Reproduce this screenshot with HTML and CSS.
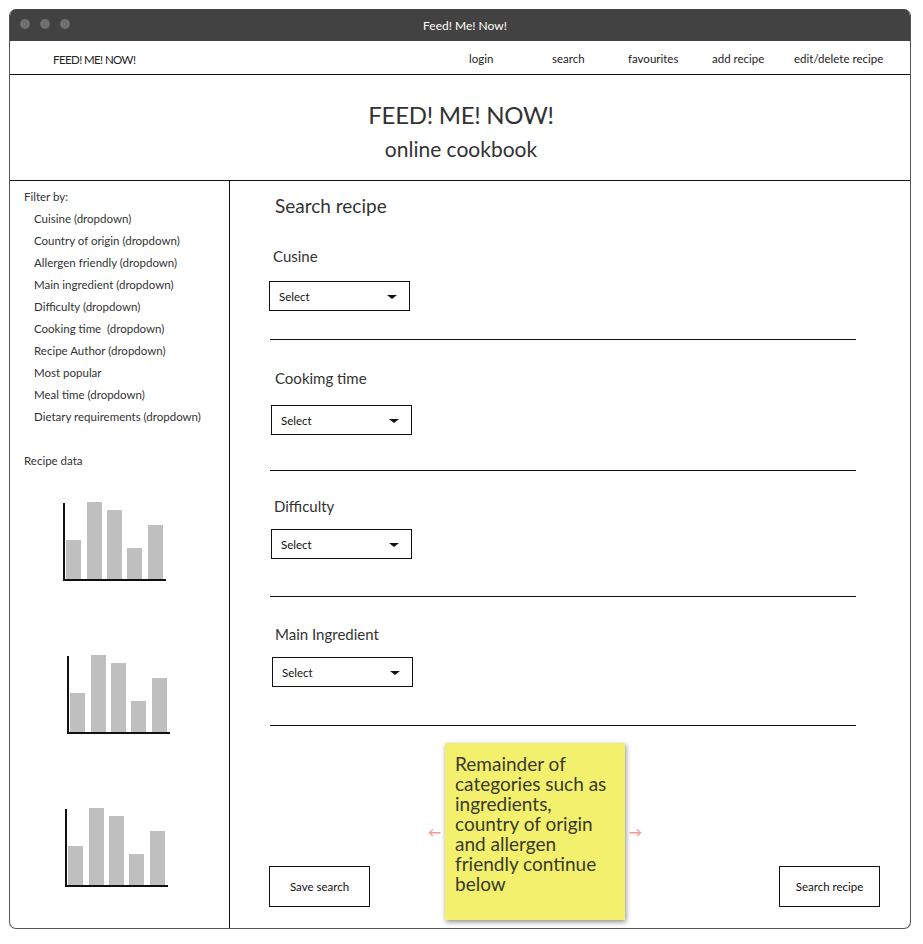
FILE: index.html
```html
<!DOCTYPE html>
<html>
<head>
<meta charset="utf-8">
<link rel="stylesheet" href="styles.css">
<title>Feed! Me! Now!</title>
</head>
<body>
<div class="window">
  <div class="titlebar">
    <div class="dots"><span class="dot"></span><span class="dot"></span><span class="dot"></span></div>
    <div class="title">Feed! Me! Now!</div>
  </div>
  <div class="nav">
    <div class="brand">FEED! ME! NOW!</div>
    <div class="links">
      <span class="l-login">login</span>
      <span class="l-search">search</span>
      <span class="l-fav">favourites</span>
      <span class="l-add">add recipe</span>
      <span class="l-edit">edit/delete recipe</span>
    </div>
  </div>
  <div class="header">
    <div class="h1">FEED! ME! NOW!</div>
    <div class="h2">online cookbook</div>
  </div>
  <div class="body">
    <aside class="sidebar">
      <div class="side-title">Filter by:</div>
      <ul class="filters">
        <li>Cuisine (dropdown)</li>
        <li>Country of origin (dropdown)</li>
        <li>Allergen friendly (dropdown)</li>
        <li>Main ingredient (dropdown)</li>
        <li>Difficulty (dropdown)</li>
        <li>Cooking time&nbsp; (dropdown)</li>
        <li>Recipe Author (dropdown)</li>
        <li>Most popular</li>
        <li>Meal time (dropdown)</li>
        <li>Dietary requirements (dropdown)</li>
      </ul>
      <div class="side-title data-title">Recipe data</div>
      <div class="charts">
        <svg class="chart c1" width="110" height="82" viewBox="0 0 110 82">
          <rect x="3" y="38" width="15" height="39" fill="#bfbfbf"/>
          <rect x="24" y="0" width="15" height="77" fill="#bfbfbf"/>
          <rect x="44" y="8" width="15" height="69" fill="#bfbfbf"/>
          <rect x="64" y="46" width="15" height="31" fill="#bfbfbf"/>
          <rect x="85" y="23" width="15" height="54" fill="#bfbfbf"/>
          <path d="M1 1 V78 H103" fill="none" stroke="#111" stroke-width="2"/>
        </svg>
        <svg class="chart c2" width="110" height="82" viewBox="0 0 110 82">
          <rect x="3" y="38" width="15" height="39" fill="#bfbfbf"/>
          <rect x="24" y="0" width="15" height="77" fill="#bfbfbf"/>
          <rect x="44" y="8" width="15" height="69" fill="#bfbfbf"/>
          <rect x="64" y="46" width="15" height="31" fill="#bfbfbf"/>
          <rect x="85" y="23" width="15" height="54" fill="#bfbfbf"/>
          <path d="M1 1 V78 H103" fill="none" stroke="#111" stroke-width="2"/>
        </svg>
        <svg class="chart c3" width="110" height="82" viewBox="0 0 110 82">
          <rect x="3" y="38" width="15" height="39" fill="#bfbfbf"/>
          <rect x="24" y="0" width="15" height="77" fill="#bfbfbf"/>
          <rect x="44" y="8" width="15" height="69" fill="#bfbfbf"/>
          <rect x="64" y="46" width="15" height="31" fill="#bfbfbf"/>
          <rect x="85" y="23" width="15" height="54" fill="#bfbfbf"/>
          <path d="M1 1 V78 H103" fill="none" stroke="#111" stroke-width="2"/>
        </svg>
      </div>
    </aside>
    <main class="main">
      <div class="main-title">Search recipe</div>
      <section class="field f1">
        <div class="label">Cusine</div>
        <div class="select"><span>Select</span><span class="caret"></span></div>
      </section>
      <section class="field f2">
        <div class="label">Cookimg time</div>
        <div class="select"><span>Select</span><span class="caret"></span></div>
      </section>
      <section class="field f3">
        <div class="label">Difficulty</div>
        <div class="select"><span>Select</span><span class="caret"></span></div>
      </section>
      <section class="field f4">
        <div class="label">Main Ingredient</div>
        <div class="select"><span>Select</span><span class="caret"></span></div>
      </section>
      <div class="actions">
        <div class="btn">Save search</div>
        <div class="btn">Search recipe</div>
      </div>
      <div class="note-wrap">
        <span class="arrow left">&#8592;</span>
        <div class="note">Remainder of categories such as ingredients, country of origin and allergen friendly continue below</div>
        <span class="arrow right">&#8594;</span>
      </div>
    </main>
  </div>
</div>
</body>
</html>
```
FILE: styles.css
```css
* { box-sizing: border-box; }
html, body { margin: 0; padding: 0; background: #fff; }
body {
  font-family: "Lato", "Liberation Sans", sans-serif;
  color: #333;
}
.window {
  margin: 9px 0 0 9px;
  width: 902px;
  height: 920px;
  border: 1px solid #555;
  border-top: none;
  border-radius: 7px;
  overflow: hidden;
  display: flex;
  flex-direction: column;
}
.titlebar {
  height: 32px;
  background: #424242;
  position: relative;
  display: flex;
  align-items: center;
  justify-content: center;
  margin: 0 -1px;
}
.dots {
  position: absolute;
  left: 11px;
  top: 10px;
  display: flex;
  gap: 10px;
}
.dot {
  width: 10px;
  height: 10px;
  border-radius: 50%;
  background: #6f6f6f;
}
.title {
  color: #fff;
  font-size: 12px;
  margin-left: 10px;
}
.nav {
  height: 34px;
  border-bottom: 1px solid #111;
  display: flex;
  align-items: center;
  margin-left: -3px;
  padding-left: 46px;
  font-size: 11.5px;
  color: #222;
}
.brand { padding-top: 3px; letter-spacing: -0.6px; }
.links {
  margin-left: auto;
  display: flex;
  font-size: 11.5px;
  padding-top: 1px;
}
.links span { display: block; }
.l-login { width: 83px; }
.l-search { width: 76px; }
.l-fav { width: 84px; }
.l-add { width: 82px; }
.l-edit { width: 116px; }
.header {
  height: 106px;
  border-bottom: 1px solid #111;
  margin-left: -3px;
  margin-right: -5px;
  text-align: center;
  padding-top: 25px;
  color: #333;
}
.h1 {
  font-size: 24px;
  line-height: 30px;
  letter-spacing: -0.3px;
}
.h2 {
  font-size: 21px;
  line-height: 30px;
  margin-top: 4px;
}
.body {
  flex: 1;
  display: flex;
  min-height: 0;
}
.sidebar {
  width: 220px;
  border-right: 1px solid #111;
  padding: 5px 0 0 14px;
  font-size: 11.5px;
  color: #333;
}
.side-title { line-height: 22px; }
.filters {
  list-style: none;
  margin: 0;
  padding: 0 0 0 10px;
}
.filters li { line-height: 22px; }
.data-title { margin-top: 22px; }
.charts {
  display: flex;
  flex-direction: column;
  margin-top: 30px;
  gap: 71px;
}
.chart { display: block; }
.c1 { margin-left: 39px; }
.c2 { margin-left: 43px; }
.c3 { margin-left: 41px; }
.main {
  flex: 1;
  position: relative;
  display: flex;
  flex-direction: column;
  padding: 13px 54px 21px 40px;
}
.main-title {
  font-size: 19px;
  line-height: 24px;
  padding-left: 5px;
  color: #333;
}
.field {
  border-bottom: 1px solid #111;
}
.label {
  font-size: 15px;
  line-height: 20px;
  padding-left: 3px;
  color: #333;
}
.select {
  width: 141px;
  height: 30px;
  border: 1px solid #111;
  display: flex;
  align-items: center;
  justify-content: space-between;
  padding: 0 12px 0 9px;
  font-size: 11.5px;
  color: #111;
  margin-left: -1px;
}
.caret {
  width: 0;
  height: 0;
  border-left: 5px solid transparent;
  border-right: 5px solid transparent;
  border-top: 4px solid #111;
  margin-top: 2px;
}
.f1 { padding: 28px 0 28px; }
.f1 .select { margin-top: 15px; }
.f2 { padding: 28px 0 35px; }
.f2 .label { padding-left: 5px; }
.f2 .select { margin-left: 1px; margin-top: 17px; }
.f3 { padding: 25px 0 37px; }
.f3 .label { padding-left: 4px; }
.f3 .select { margin-left: 1px; margin-top: 13px; }
.f4 { padding: 27px 0 38px; }
.f4 .label { padding-left: 5px; }
.f4 .select { margin-left: 2px; margin-top: 13px; }
.actions {
  margin-top: auto;
  margin-right: -24px;
  display: flex;
  justify-content: space-between;
  align-items: flex-end;
  margin-left: -1px;
}
.btn {
  width: 101px;
  height: 41px;
  border: 1px solid #111;
  display: flex;
  align-items: center;
  justify-content: center;
  font-size: 11.5px;
  color: #111;
}
.note-wrap {
  position: absolute;
  left: 198px;
  top: 562px;
  display: flex;
  align-items: center;
}
.note {
  width: 180px;
  height: 177px;
  background: #f2f06c;
  box-shadow: 1px 2px 5px rgba(0,0,0,0.45);
  padding: 11px 8px 0 10px;
  font-size: 19px;
  line-height: 20px;
  color: #3a3a2a;
  margin: 0 4px;
}
.arrow {
  color: #f19a9a;
  font-size: 13px;
  font-weight: bold;
  line-height: 1;
  margin-top: 2px;
}
```
